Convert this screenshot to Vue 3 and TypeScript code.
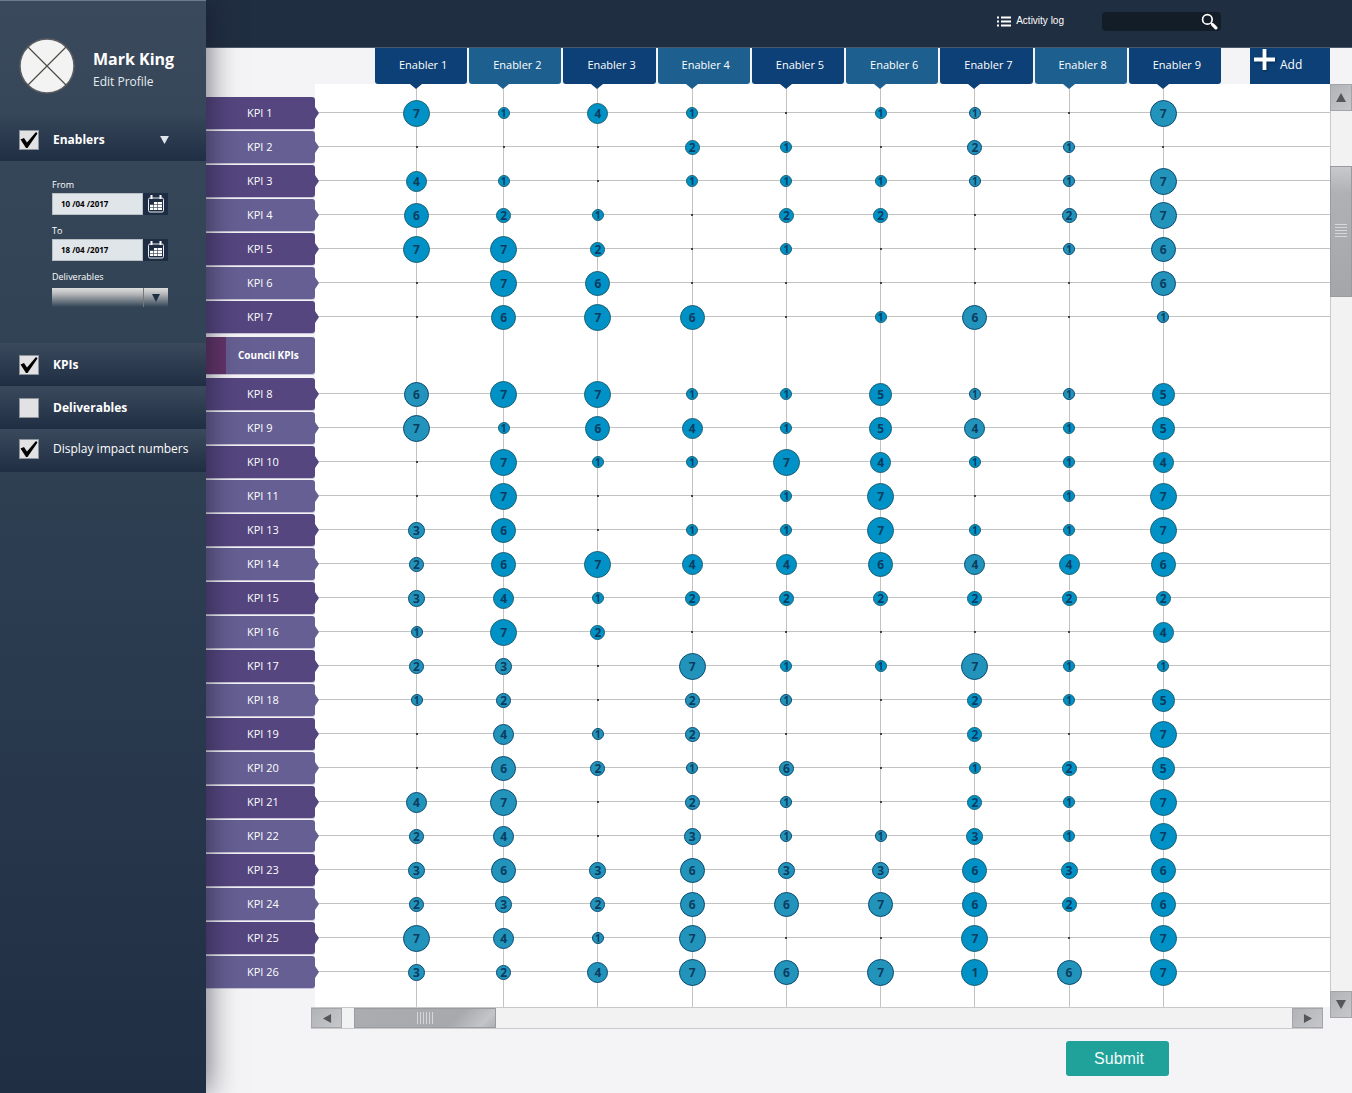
<script setup lang="ts">
import { computed, ref } from 'vue'

interface Bubble {
  value: string
  size: number
  muted: boolean
}

interface Row {
  name: string
  heading: boolean
  cells: (Bubble | null)[]
}

const enablers = ref(true)
const kpis = ref(true)
const deliverables = ref(false)
const showNumbers = ref(true)
const fromDate = ref('10 /04 /2017')
const toDate = ref('18 /04 /2017')
const deliverable = ref('')
const search = ref('')

const columns = [1, 2, 3, 4, 5, 6, 7, 8, 9].map((n) => `Enabler ${n}`)

const diameters: Record<string, number> = { 1: 12, 2: 15, 3: 17, 4: 21, 5: 23, 6: 25, 7: 27 }

// One token per enabler: "." is no impact, "~" marks the softer blue,
// "6:2" is impact 6 drawn at the size of a 2.
const source: [string, string][] = [
  ['KPI 1', '7 1 4 1 . 1 1~ . 7~'],
  ['KPI 2', '. . . 2 1 . 2~ 1~ .'],
  ['KPI 3', '4 1 . 1 1 1 1~ 1~ 7~'],
  ['KPI 4', '6 2 1 . 2 2 . 2~ 7~'],
  ['KPI 5', '7 7 2 . 1 . . 1~ 6~'],
  ['KPI 6', '. 7 6 . . . . . 6~'],
  ['KPI 7', '. 6 7 6 . 1 6~ . 1~'],
  ['Council KPIs', ''],
  ['KPI 8', '6~ 7 7 1 1 5 1~ 1~ 5'],
  ['KPI 9', '7~ 1 6 4 1 5 4~ 1 5'],
  ['KPI 10', '. 7 1 1 7 4 1 1 4'],
  ['KPI 11', '. 7 . . 1 7 . 1 7'],
  ['KPI 13', '3~ 6 . 1 1 7 1 1 7'],
  ['KPI 14', '2~ 6 7 4 4 6 4~ 4 6'],
  ['KPI 15', '3~ 4 1 2 2 2 2 2 2'],
  ['KPI 16', '1~ 7 2 . . . . . 4'],
  ['KPI 17', '2~ 3~ . 7~ 1 1 7~ 1 1'],
  ['KPI 18', '1~ 2~ . 2~ 1~ . 2 1 5'],
  ['KPI 19', '. 4~ 1~ 2~ . . 2 . 7'],
  ['KPI 20', '. 6~ 2~ 1~ 6:2~ . 1 2 5'],
  ['KPI 21', '4~ 7~ . 2~ 1~ . 2 1 7'],
  ['KPI 22', '2~ 4~ . 3~ 1~ 1~ 3 1 7'],
  ['KPI 23', '3~ 6~ 3~ 6~ 3~ 3~ 6 3 6'],
  ['KPI 24', '2~ 3~ 2~ 6~ 6~ 7:6~ 6 2 6'],
  ['KPI 25', '7~ 4~ 1~ 7~ . . 7 . 7'],
  ['KPI 26', '3~ 2~ 4~ 7~ 6~ 7~ 1:7 6~ 7'],
]

function parse(token: string): Bubble | null {
  if (token === '.') return null
  const [value, size] = token.replace('~', '').split(':')
  return { value, size: diameters[size ?? value], muted: token.endsWith('~') }
}

const rows = computed<Row[]>(() =>
  source.map(([name, cells]) => ({
    name,
    heading: cells === '',
    cells: cells === '' ? columns.map(() => null) : cells.split(' ').map(parse),
  })),
)
</script>

<template>
  <div class="app">
    <aside class="side">
      <div class="profile">
        <svg class="avatar" viewBox="0 0 56 56" aria-hidden="true">
          <circle cx="28" cy="28" r="27" fill="#f3f3f3" stroke="#5d5f63" stroke-width="1.5" />
          <path d="M9 9 47 47M47 9 9 47" stroke="#4b4b45" stroke-width="1.2" />
        </svg>
        <div class="who">
          <strong>Mark King</strong>
          <a href="#profile">Edit Profile</a>
        </div>
      </div>

      <label class="toggle first">
        <span class="tick">
          <input v-model="enablers" type="checkbox" />
          <svg v-if="enablers" viewBox="0 0 20 20"><path d="M1.500 9.500 5 8l3 4.500L17 2l1.500 1.500L8.500 18H7z" /></svg>
        </span>
        <b>Enablers</b>
        <svg class="caret" viewBox="0 0 10 9"><path d="M0 0h10L5 9z" fill="#dfe5ea" /></svg>
      </label>

      <div class="filters">
        <label for="from">From</label>
        <div class="date">
          <input id="from" v-model="fromDate" type="text" />
          <button type="button" aria-label="Pick from date">
            <svg viewBox="0 0 16 18">
              <rect x="0.500" y="3" width="15" height="14" rx="1.500" fill="none" stroke="#e8ecf0" />
              <path d="M3.500 0v4M12.500 0v4" stroke="#fff" stroke-width="2" />
              <path d="M6 7h8v8H2V9.500h4z" fill="#fff" />
              <path d="M2 9.500h12M2 12.500h12M5.500 7v8M9.500 7v8" stroke="#26374d" stroke-width="0.600" />
            </svg>
          </button>
        </div>
        <label for="to">To</label>
        <div class="date">
          <input id="to" v-model="toDate" type="text" />
          <button type="button" aria-label="Pick to date">
            <svg viewBox="0 0 16 18">
              <rect x="0.500" y="3" width="15" height="14" rx="1.500" fill="none" stroke="#e8ecf0" />
              <path d="M3.500 0v4M12.500 0v4" stroke="#fff" stroke-width="2" />
              <path d="M6 7h8v8H2V9.500h4z" fill="#fff" />
              <path d="M2 9.500h12M2 12.500h12M5.500 7v8M9.500 7v8" stroke="#26374d" stroke-width="0.600" />
            </svg>
          </button>
        </div>
        <label for="deliverable">Deliverables</label>
        <div class="pick">
          <select id="deliverable" v-model="deliverable"><option value=""></option></select>
          <svg viewBox="0 0 8 8"><path d="M0 0h8L4 8z" fill="#1d2f45" /></svg>
        </div>
      </div>

      <label class="toggle">
        <span class="tick">
          <input v-model="kpis" type="checkbox" />
          <svg v-if="kpis" viewBox="0 0 20 20"><path d="M1.500 9.500 5 8l3 4.500L17 2l1.500 1.500L8.500 18H7z" /></svg>
        </span>
        <b>KPIs</b>
      </label>
      <label class="toggle">
        <span class="tick">
          <input v-model="deliverables" type="checkbox" />
          <svg v-if="deliverables" viewBox="0 0 20 20"><path d="M1.500 9.500 5 8l3 4.500L17 2l1.500 1.500L8.500 18H7z" /></svg>
        </span>
        <b>Deliverables</b>
      </label>
      <label class="toggle last">
        <span class="tick">
          <input v-model="showNumbers" type="checkbox" />
          <svg v-if="showNumbers" viewBox="0 0 20 20"><path d="M1.500 9.500 5 8l3 4.500L17 2l1.500 1.500L8.500 18H7z" /></svg>
        </span>
        <span>Display impact numbers</span>
      </label>
    </aside>

    <main class="main">
      <header class="topbar">
        <a class="log" href="#log">
          <svg viewBox="0 0 14 11" aria-hidden="true">
            <path d="M4 1.500h10M4 5.500h10M4 9.500h10" stroke="#fff" stroke-width="1.800" />
            <path d="M0 1.500h2M0 5.500h2M0 9.500h2" stroke="#fff" stroke-width="1.800" />
          </svg>
          Activity log
        </a>
        <div class="search">
          <input v-model="search" type="text" aria-label="Search" />
          <button type="button" aria-label="Search">
            <svg viewBox="0 0 16 16">
              <circle cx="6" cy="6" r="4.500" fill="none" stroke="#fff" stroke-width="1.600" />
              <path d="M9.500 9.500 11 11" stroke="#fff" stroke-width="1.500" />
              <path d="m11 11 3 3" stroke="#fff" stroke-width="3" stroke-linecap="round" />
            </svg>
          </button>
        </div>
      </header>

      <div class="board">
        <table class="matrix">
          <colgroup>
            <col class="c-label" />
            <col class="c-lead" />
            <col v-for="c in columns" :key="c" />
            <col class="c-gap" />
            <col class="c-add" />
          </colgroup>
          <thead>
            <tr>
              <td></td>
              <td></td>
              <th v-for="c in columns" :key="c" scope="col"><div class="tab">{{ c }}</div></th>
              <td></td>
              <td>
                <button class="add" type="button">
                  <svg viewBox="0 0 22 22" aria-hidden="true"><path d="M9 0h4v9h9v4h-9v9H9v-9H0V9h9z" fill="#fff" /></svg>
                  Add
                </button>
              </td>
            </tr>
          </thead>
          <tbody>
            <tr class="pad">
              <th></th>
              <td></td>
              <td v-for="c in columns" :key="c" class="cell"></td>
              <td colspan="2"></td>
            </tr>
            <tr v-for="row in rows" :key="row.name" :class="{ heading: row.heading }">
              <th scope="row"><div class="kpi">{{ row.name }}</div></th>
              <td class="line"></td>
              <td v-for="(cell, i) in row.cells" :key="i" class="cell line">
                <div v-if="!row.heading" class="spot">
                  <span
                    v-if="cell"
                    class="bubble"
                    :class="{ muted: cell.muted, small: cell.size < 15 }"
                    :style="{ width: cell.size + 'px', height: cell.size + 'px' }"
                  >{{ showNumbers ? cell.value : '' }}</span>
                  <i v-else class="dot"></i>
                </div>
              </td>
              <td colspan="2" class="line"></td>
            </tr>
            <tr class="pad end">
              <th></th>
              <td></td>
              <td v-for="c in columns" :key="c" class="cell"></td>
              <td colspan="2"></td>
            </tr>
          </tbody>
        </table>

        <div class="vscroll">
          <button type="button" aria-label="Scroll up"><svg viewBox="0 0 10 9"><path d="M5 0l5 9H0z" /></svg></button>
          <div class="thumb"><span class="grip"></span></div>
          <button type="button" aria-label="Scroll down"><svg viewBox="0 0 10 9"><path d="M0 0h10L5 9z" /></svg></button>
        </div>
      </div>

      <div class="hscroll">
        <button type="button" aria-label="Scroll left"><svg viewBox="0 0 9 10"><path d="M9 0v10L0 5z" /></svg></button>
        <div class="thumb"><span class="grip"></span></div>
        <button type="button" aria-label="Scroll right"><svg viewBox="0 0 9 10"><path d="M0 0v10l9-5z" /></svg></button>
      </div>

      <div class="actions">
        <button class="submit" type="submit">Submit</button>
      </div>
    </main>
  </div>
</template>

<style>
body {
  margin: 0;
}
</style>

<style scoped>
.app {
  display: flex;
  min-height: 100vh;
  background: #f4f4f6;
  color: #fff;
  font: 11px/16px "Open Sans", "Noto Sans", sans-serif;
}
* {
  box-sizing: border-box;
}
button,
input,
select {
  margin: 0;
  padding: 0;
  border: 0;
  border-radius: 0;
  background: none;
  color: inherit;
  font: inherit;
}
svg {
  display: block;
}

.side {
  flex: none;
  position: relative;
  z-index: 2;
  width: 206px;
  border-top: 1px solid #6d7c8b;
  background: linear-gradient(#3a495c, #314355 30%, #2c3c50 55%, #202e43);
  box-shadow: 2px 0 28px rgba(20, 20, 40, 0.6);
}
.profile {
  display: flex;
  align-items: center;
  gap: 18px;
  height: 112px;
  padding: 18px 0 0 19px;
}
.avatar {
  width: 56px;
  height: 56px;
}
.who {
  display: flex;
  flex-direction: column;
  gap: 3px;
  margin-top: 4px;
}
.profile strong {
  font-size: 16px;
  line-height: 24px;
}
.profile a {
  color: #e6ebf0;
  font-size: 12px;
  text-decoration: none;
}
.toggle {
  display: flex;
  align-items: center;
  gap: 14px;
  height: 43px;
  padding: 0 37px 0 19px;
  background: linear-gradient(#3a495c, #202e43);
  font-size: 12px;
  white-space: nowrap;
}
.toggle.first {
  height: 48px;
  padding-top: 6px;
  background: linear-gradient(#39485b00, #202e43);
}
.toggle.last {
  padding-right: 0;
  padding-bottom: 3px;
}
.tick {
  display: grid;
  width: 20px;
  height: 20px;
}
.tick > * {
  grid-area: 1 / 1;
}
.tick input {
  appearance: none;
  border: 1px solid #8e949b;
  background: #e2e2e4;
}
.tick svg {
  position: relative;
  pointer-events: none;
}
.caret {
  width: 9px;
  height: 8px;
  margin-left: auto;
}
.filters {
  display: flex;
  flex-direction: column;
  height: 182px;
  padding: 18px 38px 0 52px;
  font-size: 9px;
  line-height: 12px;
}
.filters label {
  height: 14px;
}
.date {
  display: flex;
  height: 22px;
  margin-bottom: 10px;
}
.date input {
  width: 91px;
  padding-left: 8px;
  border: 1px solid #b8bfc4;
  background: #dfe5e8;
  color: #000;
  font-size: 8px;
  font-weight: 700;
}
.date button {
  display: grid;
  place-items: center;
  width: 25px;
  background: #1e2d43;
}
.date svg {
  width: 16px;
  height: 18px;
}
.pick {
  display: grid;
  align-items: center;
  height: 19px;
  margin-top: 3px;
}
.pick > * {
  grid-area: 1 / 1;
}
.pick select {
  appearance: none;
  width: 100%;
  height: 19px;
  background:
    linear-gradient(#777, #777) 91px 0 / 1px 100% no-repeat,
    linear-gradient(#dedede, #b9babc 30%, #33445500);
}
.pick svg {
  position: relative;
  justify-self: end;
  width: 8px;
  height: 8px;
  margin-right: 8px;
  pointer-events: none;
}

.main {
  flex: 1;
  min-width: 0;
}
.topbar {
  display: flex;
  align-items: center;
  justify-content: flex-end;
  gap: 38px;
  height: 48px;
  padding: 0 131px 5px 0;
  border-bottom: 1px solid #4c5868;
  background: #202e41;
}
.log {
  display: flex;
  align-items: center;
  gap: 5px;
  color: #fff;
  font: 10px/14px "Liberation Sans", Arial, sans-serif;
  text-decoration: none;
}
.log svg {
  width: 14px;
  height: 11px;
}
.search {
  display: flex;
  width: 119px;
  height: 19px;
  border-radius: 4px;
  background: #131d28;
}
.search input {
  flex: 1;
  min-width: 0;
  padding-left: 6px;
}
.search button {
  width: 20px;
}
.search svg {
  width: 17px;
  height: 17px;
}

.board {
  display: flex;
}
.matrix {
  flex: 1;
  width: 100%;
  min-width: 0;
  table-layout: fixed;
  border-collapse: collapse;
}
.matrix th,
.matrix td {
  height: 34px;
  padding: 0;
  font-weight: 400;
  text-align: left;
}
.c-label {
  width: 109px;
}
.c-lead {
  width: 59px;
}
.c-gap {
  width: 28px;
}
.c-add {
  width: 80px;
}
.matrix thead th,
.matrix thead td {
  height: 36px;
}
.tab {
  position: relative;
  height: 36px;
  margin: 0 1px;
  padding-left: 4px;
  border-radius: 0 0 3px 3px;
  background: #0c4076;
  line-height: 34px;
  text-align: center;
}
.tab::after {
  content: "";
  position: absolute;
  top: 100%;
  left: 28px;
  border: 6px solid transparent;
  border-top: 5px solid #0c4076;
  border-bottom: 0;
}
thead th:nth-child(3) .tab::after {
  left: 35px;
}
thead th:nth-child(even) .tab {
  background: #1d608f;
}
thead th:nth-child(even) .tab::after {
  border-top-color: #1d608f;
}
.add {
  display: flex;
  gap: 5px;
  width: 100%;
  height: 36px;
  padding-left: 4px;
  background: #0c4076;
  font-size: 12px;
  line-height: 34px;
}
.add svg {
  width: 21px;
  height: 21px;
  margin-top: 1px;
  filter: drop-shadow(1px 1px 1px #06284d);
}
tbody td {
  background-color: #fff;
  background-repeat: no-repeat;
}
.line {
  background-image: linear-gradient(#c3c3c3, #c3c3c3);
  background-position: 0 16px;
  background-size: 100% 1px;
}
.cell {
  background-image: linear-gradient(#c3c3c3, #c3c3c3);
  background-position: 35px 0;
  background-size: 1px 100%;
}
.cell.line {
  background-image: linear-gradient(#c3c3c3, #c3c3c3), linear-gradient(#c3c3c3, #c3c3c3);
  background-position: 35px 0, 0 16px;
  background-size: 1px 100%, 100% 1px;
}
.cell:nth-child(3) {
  background-position: 42px 0, 0 16px;
}
.spot {
  display: flex;
  align-items: center;
  justify-content: center;
  width: 71px;
  height: 33px;
}
.cell:nth-child(3) .spot {
  width: 85px;
}
.bubble {
  display: flex;
  align-items: center;
  justify-content: center;
  border: 1px solid #1c6174;
  border-radius: 50%;
  background: #0092c6;
  color: #0c3c60;
  font-size: 12px;
  font-weight: 700;
  line-height: 11px;
}
.bubble.muted {
  border-color: #0c4a70;
  background: #2294bb;
}
.bubble.small {
  font-size: 10px;
  line-height: 10px;
}
.dot {
  width: 2px;
  height: 2px;
  border-radius: 1px;
  background: #111;
}
.kpi {
  position: relative;
  height: 32px;
  padding-left: 41px;
  border-radius: 0 3px 3px 0;
  background: #55467f;
  box-shadow: 0 1px #c8c3d8;
  line-height: 31px;
}
.kpi::after {
  content: "";
  position: absolute;
  top: 10px;
  left: 100%;
  border: 6px solid transparent;
  border-left: 4px solid #55467f;
  border-right: 0;
}
tr:nth-child(odd) .kpi {
  background: #665f93;
}
tr:nth-child(odd) .kpi::after {
  border-left-color: #665f93;
}
.heading th,
.heading td {
  height: 43px;
}
.heading .line {
  background-size: 0 0;
}
.heading .cell.line {
  background-size: 1px 100%, 0 0;
}
.matrix .heading .kpi {
  height: 37px;
  padding-left: 32px;
  background: linear-gradient(90deg, #633468 20px, #665f93 20px);
  font-size: 10px;
  font-weight: 700;
  line-height: 37px;
}
.matrix .heading .kpi::after {
  display: none;
}
.matrix .pad th,
.matrix .pad td {
  height: 12px;
}
.matrix .end th,
.matrix .end td {
  height: 18px;
}

.vscroll {
  flex: none;
  display: flex;
  flex-direction: column;
  width: 22px;
  margin: 36px 0 -11px;
  background: #f2f2f3;
  box-shadow: inset 1px 0 #c9c9cb;
}
.vscroll button,
.hscroll button {
  display: grid;
  place-items: center;
  border: 1px solid #a4a5a8;
  background: linear-gradient(135deg, #b2b3b6, #c6c7ca);
  fill: #55565a;
}
.vscroll button {
  height: 27px;
}
.vscroll button:last-child {
  margin-top: auto;
}
.vscroll svg,
.hscroll svg {
  width: 10px;
  height: 9px;
}
.thumb {
  display: grid;
  place-items: center;
  border: 1px solid #9a9b9e;
}
.vscroll .thumb {
  height: 131px;
  margin-top: 55px;
  background: linear-gradient(#c8c9cc, #b0b1b4 20%, #a5a6a9);
}
.vscroll .grip {
  width: 12px;
  height: 15px;
  background: repeating-linear-gradient(#d6d7da 0 1px, transparent 1px 3px);
}
.hscroll {
  display: flex;
  height: 22px;
  margin: 0 29px 0 105px;
  border: solid #c9c9cb;
  border-width: 1px 0;
  background: #f2f2f3;
}
.hscroll button {
  width: 31px;
}
.hscroll button:last-child {
  margin-left: auto;
}
.hscroll .thumb {
  width: 142px;
  margin-left: 12px;
  background: linear-gradient(135deg, #abacaf, #a8a9ac 70%, #c4c5c8 90%, #aeafb2);
}
.hscroll .grip {
  width: 16px;
  height: 12px;
  background: repeating-linear-gradient(90deg, #d6d7da 0 1px, transparent 1px 3px);
}
.actions {
  display: flex;
  justify-content: flex-end;
  padding: 12px 183px 17px 0;
}
.submit {
  width: 103px;
  height: 35px;
  padding-left: 3px;
  border-radius: 3px;
  background: #20a29a;
  color: #f2fbfa;
  font: 16px/35px "Liberation Sans", Arial, sans-serif;
}
</style>
